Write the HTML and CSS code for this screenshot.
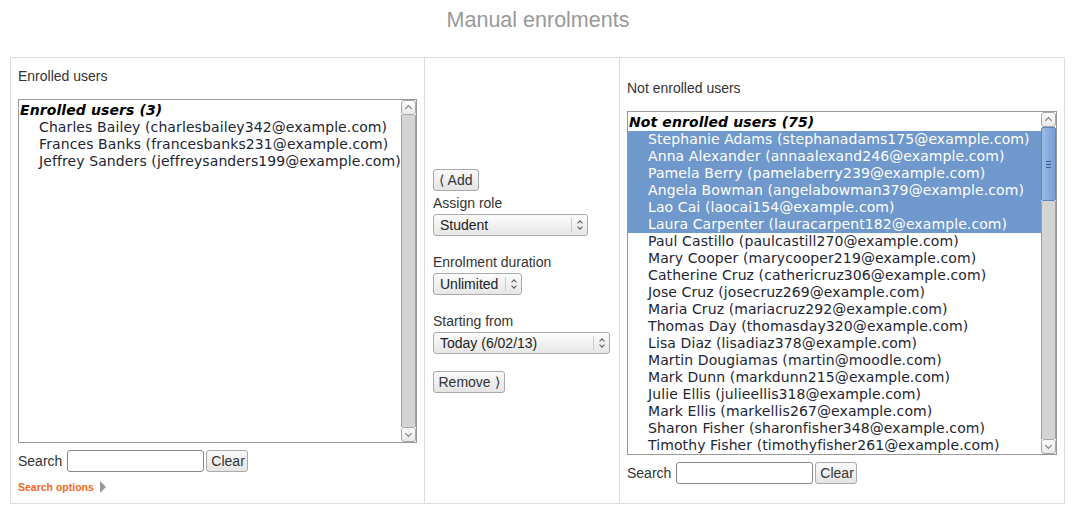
FILE: index.html
```html
<!DOCTYPE html>
<html lang="en">
<head>
    <meta charset="UTF-8" />
    <title>Manual enrolments</title>
    <link rel="stylesheet" href="styles.css">
</head>
<body>
    <h2 class="page-title">Manual enrolments</h2>

    <div class="enrol-table">
        <!-- existing enrolments -->
        <div class="cell cell-existing">
            <div class="cell-label">Enrolled users</div>
            <div class="listbox">
                <div class="options">
                    <div class="optgroup">Enrolled users (3)</div>
                    <div class="option">Charles Bailey (charlesbailey342@example.com)</div>
                    <div class="option">Frances Banks (francesbanks231@example.com)</div>
                    <div class="option">Jeffrey Sanders (jeffreysanders199@example.com)</div>
                </div>
                <div class="scrollbar">
                    <div class="sb-btn sb-up"></div>
                    <div class="sb-track"></div>
                    <div class="sb-btn sb-down"></div>
                </div>
            </div>
            <div class="search-row">
                <span>Search</span>
                <input type="text" class="search-input" />
                <button class="btn btn-clear">Clear</button>
            </div>
            <div class="search-options">Search options <span class="arrow"></span></div>
        </div>

        <!-- add / remove controls -->
        <div class="cell cell-controls">
            <button class="btn btn-add">&#x27E8; Add</button>
            <div class="control-label">Assign role</div>
            <div class="fake-select sel-role"><span>Student</span><i class="sel-arrow"></i></div>
            <div class="control-label">Enrolment duration</div>
            <div class="fake-select sel-duration"><span>Unlimited</span><i class="sel-arrow"></i></div>
            <div class="control-label">Starting from</div>
            <div class="fake-select sel-start"><span>Today (6/02/13)</span><i class="sel-arrow"></i></div>
            <button class="btn btn-remove">Remove &#x27E9;</button>
        </div>

        <!-- potential users -->
        <div class="cell cell-potential">
            <div class="cell-label">Not enrolled users</div>
            <div class="listbox listbox-wide">
                <div class="options">
                    <div class="optgroup">Not enrolled users (75)</div>
                    <div class="option selected">Stephanie Adams (stephanadams175@example.com)</div>
                    <div class="option selected">Anna Alexander (annaalexand246@example.com)</div>
                    <div class="option selected">Pamela Berry (pamelaberry239@example.com)</div>
                    <div class="option selected">Angela Bowman (angelabowman379@example.com)</div>
                    <div class="option selected">Lao Cai (laocai154@example.com)</div>
                    <div class="option selected">Laura Carpenter (lauracarpent182@example.com)</div>
                    <div class="option">Paul Castillo (paulcastill270@example.com)</div>
                    <div class="option">Mary Cooper (marycooper219@example.com)</div>
                    <div class="option">Catherine Cruz (cathericruz306@example.com)</div>
                    <div class="option">Jose Cruz (josecruz269@example.com)</div>
                    <div class="option">Maria Cruz (mariacruz292@example.com)</div>
                    <div class="option">Thomas Day (thomasday320@example.com)</div>
                    <div class="option">Lisa Diaz (lisadiaz378@example.com)</div>
                    <div class="option">Martin Dougiamas (martin@moodle.com)</div>
                    <div class="option">Mark Dunn (markdunn215@example.com)</div>
                    <div class="option">Julie Ellis (julieellis318@example.com)</div>
                    <div class="option">Mark Ellis (markellis267@example.com)</div>
                    <div class="option">Sharon Fisher (sharonfisher348@example.com)</div>
                    <div class="option">Timothy Fisher (timothyfisher261@example.com)</div>
                </div>
                <div class="scrollbar">
                    <div class="sb-btn sb-up"></div>
                    <div class="sb-thumb"><b></b><b></b><b></b></div>
                    <div class="sb-track"></div>
                    <div class="sb-btn sb-down"></div>
                </div>
            </div>
            <div class="search-row">
                <span>Search</span>
                <input type="text" class="search-input" />
                <button class="btn btn-clear">Clear</button>
            </div>
        </div>
    </div>
</body>
</html>
```

FILE: styles.css
```css
* {
    margin: 0;
    padding: 0;
    box-sizing: border-box;
}

body {
    font-family: "Liberation Sans", Arial, sans-serif;
    font-size: 14px;
    color: #333;
    background: #fff;
}

.page-title {
    height: 57px;
    padding-top: 9px;
    padding-left: 4px;
    font-size: 21.5px;
    font-weight: normal;
    line-height: 22px;
    color: #999;
    text-align: center;
}

.enrol-table {
    display: grid;
    grid-template-columns: 413px 195px 445px;
    width: 1055px;
    height: 447px;
    margin-left: 10px;
    border: 1px solid #ddd;
}

.cell {
    padding: 10px 7px 0;
}

.cell + .cell {
    border-left: 1px solid #ddd;
}

.cell-potential {
    padding-top: 22px;
}

.cell-label {
    line-height: 16px;
    margin-bottom: 15px;
}

/* list boxes */
.listbox {
    display: flex;
    width: 399px;
    height: 344px;
    border: 1px solid #999;
    background: #fff;
    font-family: "DejaVu Sans", sans-serif;
    font-size: 14px;
    letter-spacing: 0.1px;
    color: #1e2533;
}

.listbox-wide {
    width: 430px;
}

.options {
    flex: 1;
    min-width: 0;
    padding-top: 2px;
    overflow: hidden;
    white-space: nowrap;
}

.optgroup {
    height: 17px;
    line-height: 17px;
    padding-left: 1px;
    font-weight: bold;
    font-style: italic;
    color: #000;
}

.option {
    height: 17px;
    line-height: 17px;
    padding-left: 20px;
}

.option.selected {
    background: #6f98cc;
    color: #fff;
}

.scrollbar {
    display: flex;
    flex-direction: column;
    width: 15px;
    flex-shrink: 0;
}

.sb-btn {
    position: relative;
    height: 15px;
    border: 1px solid #a8a8a8;
    border-radius: 3px;
    background: linear-gradient(#fdfdfd, #e8e8e8);
}

.sb-btn::after {
    content: "";
    position: absolute;
    left: 4px;
    width: 4px;
    height: 4px;
    border-left: 1px solid #777;
    border-top: 1px solid #777;
}

.sb-up::after {
    top: 5px;
    transform: rotate(45deg);
}

.sb-down::after {
    top: 3px;
    transform: rotate(-135deg);
}

.sb-track {
    flex: 1;
    background: #d4d4d4;
    border-left: 1px solid #a0a0a0;
    border-right: 1px solid #a0a0a0;
}

.sb-thumb {
    display: flex;
    flex-direction: column;
    justify-content: center;
    align-items: center;
    gap: 2px;
    height: 74px;
    background: linear-gradient(90deg, #9dbbe6, #85a9dd 60%, #7a9fd4);
    border: 1px solid #5d85be;
    border-radius: 2px;
}

.sb-thumb b {
    display: block;
    width: 5px;
    height: 1px;
    background: #3b5d92;
}

/* search row under each list */
.search-row {
    display: flex;
    align-items: center;
    gap: 5px;
    margin-top: 7px;
    height: 22px;
}

.search-input {
    width: 137px;
    height: 22px;
    border: 1px solid #888;
    border-radius: 3px;
    background: #fff;
}

.btn {
    height: 22px;
    padding: 0 4px;
    border: 1px solid #aaa;
    border-radius: 3px;
    background: linear-gradient(#fafafa, #e4e4e4);
    font-family: "Liberation Sans", Arial, sans-serif;
    font-size: 14px;
    color: #333;
}

.btn-clear {
    width: 42px;
    margin-left: -3px;
}

.search-options {
    display: flex;
    align-items: center;
    gap: 6px;
    margin-top: 8px;
    line-height: 14px;
    font-size: 10.5px;
    font-weight: bold;
    color: #f26a1b;
}

.arrow {
    width: 0;
    height: 0;
    border-top: 6px solid transparent;
    border-bottom: 6px solid transparent;
    border-left: 6px solid #999;
}

/* middle column */
.cell-controls {
    padding-top: 111px;
    padding-left: 8px;
}

.btn-add {
    display: block;
    width: 46px;
    margin-bottom: 4px;
}

.btn-remove {
    display: block;
    width: 72px;
    margin-top: 17px;
}

.control-label {
    line-height: 16px;
    margin-bottom: 3px;
}

.fake-select {
    display: flex;
    align-items: center;
    height: 22px;
    padding-left: 6px;
    border: 1px solid #aaa;
    border-radius: 3px;
    background: linear-gradient(#fcfcfc, #e6e6e6);
    color: #222;
}

.fake-select + .control-label {
    margin-top: 18px;
}

.fake-select span {
    flex: 1;
}

.sel-arrow {
    position: relative;
    width: 16px;
    height: 14px;
    border-left: 1px solid #ccc;
}

.sel-arrow::before,
.sel-arrow::after {
    content: "";
    position: absolute;
    left: 6px;
    width: 3px;
    height: 3px;
    border-left: 1px solid #555;
    border-top: 1px solid #555;
}

.sel-arrow::before {
    top: 3px;
    transform: rotate(45deg);
}

.sel-arrow::after {
    top: 7px;
    transform: rotate(-135deg);
}

.sel-role {
    width: 155px;
}

.sel-duration {
    width: 89px;
}

.sel-start {
    width: 177px;
}
```
